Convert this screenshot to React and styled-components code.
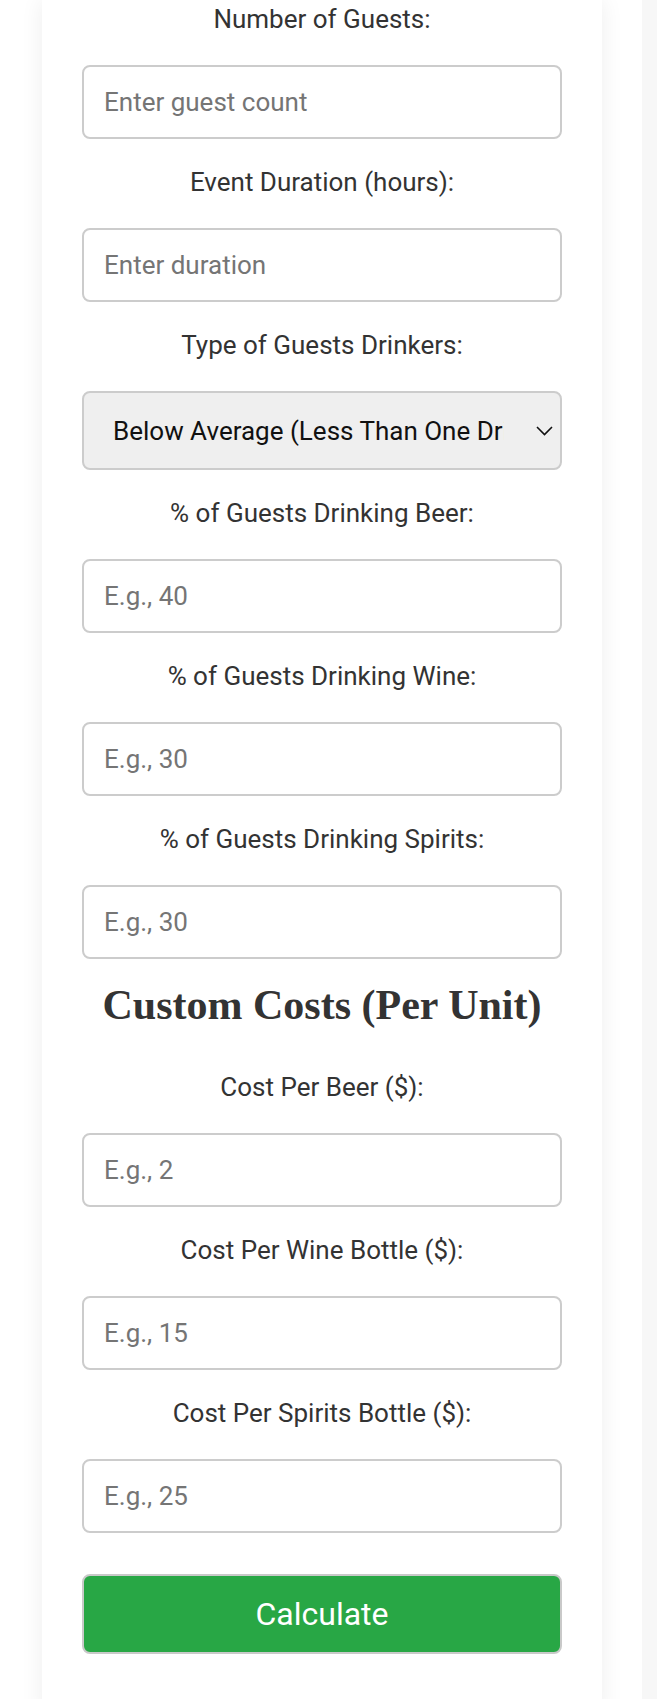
import React, { useState } from "react";
import styled, { createGlobalStyle } from "styled-components";

const GlobalStyle = createGlobalStyle`
  html, body {
    margin: 0;
    padding: 0;
    background: #f7f7f7;
  }
  body {
    font-family: Roboto, "Liberation Sans", Arial, sans-serif;
  }
  * { box-sizing: border-box; }
`;

const Page = styled.div`
  width: 642px;
  min-height: 1699px;
  background: #ffffff;
  padding: 0 40px 0 42px;
`;

const Card = styled.section`
  width: 560px;
  min-height: 1699px;
  background: #ffffff;
  box-shadow: 0 0 22px rgba(0, 0, 0, 0.07);
  padding: 4px 40px 60px;
`;

const Form = styled.form`
  display: flex;
  flex-direction: column;
  text-align: center;
`;

const Label = styled.label`
  display: block;
  font-size: 26px;
  line-height: 30px;
  color: #333;
  margin-bottom: 31px;
`;

const Input = styled.input`
  display: block;
  width: 100%;
  height: 74px;
  margin: 0 0 28px;
  padding: 0 20px;
  border: 2px solid #cccccc;
  border-radius: 8px;
  background: #fff;
  font-family: Roboto, "Liberation Sans", Arial, sans-serif;
  font-size: 26px;
  color: #222;
  outline: none;

  &::placeholder {
    color: #757575;
  }
`;

const SelectWrap = styled.div`
  position: relative;
  margin-bottom: 28px;
`;

const Select = styled.select`
  display: block;
  width: 100%;
  height: 79px;
  padding: 0 56px 0 29px;
  border: 2px solid #cccccc;
  border-radius: 8px;
  background: #efefef;
  font-family: Roboto, "Liberation Sans", Arial, sans-serif;
  font-size: 26px;
  color: #111;
  appearance: none;
  -webkit-appearance: none;
  outline: none;
`;

const Chevron = styled.svg`
  position: absolute;
  right: 9px;
  top: 35px;
  width: 17px;
  height: 10px;
  pointer-events: none;
`;

const Heading = styled.h2`
  margin: -5px 0 43px;
  font-family: "Liberation Serif", "Times New Roman", serif;
  font-weight: bold;
  font-size: 42px;
  line-height: 47px;
  color: #333;
`;

const Button = styled.button`
  display: block;
  width: 100%;
  height: 80px;
  margin-top: 13px;
  border: 2px solid #c9c9c9;
  border-radius: 8px;
  background: #28a745;
  color: #fff;
  font-family: Roboto, "Liberation Sans", Arial, sans-serif;
  font-size: 32px;
  cursor: pointer;
`;

const fields = [
  { id: "beer", label: "% of Guests Drinking Beer:", ph: "E.g., 40" },
  { id: "wine", label: "% of Guests Drinking Wine:", ph: "E.g., 30" },
  { id: "spirits", label: "% of Guests Drinking Spirits:", ph: "E.g., 30" },
];

const costs = [
  { id: "beerCost", label: "Cost Per Beer ($):", ph: "E.g., 2" },
  { id: "wineCost", label: "Cost Per Wine Bottle ($):", ph: "E.g., 15" },
  { id: "spiritsCost", label: "Cost Per Spirits Bottle ($):", ph: "E.g., 25" },
];

const App = () => {
  const [drinkers, setDrinkers] = useState("below");

  return (
    <>
      <GlobalStyle />
      <Page>
        <Card>
          <Form onSubmit={(e) => e.preventDefault()}>
            <Label htmlFor="guests">Number of Guests:</Label>
            <Input id="guests" type="number" placeholder="Enter guest count" />

            <Label htmlFor="duration">Event Duration (hours):</Label>
            <Input id="duration" type="number" placeholder="Enter duration" />

            <Label htmlFor="drinkers">Type of Guests Drinkers:</Label>
            <SelectWrap>
              <Select
                id="drinkers"
                value={drinkers}
                onChange={(e) => setDrinkers(e.target.value)}
              >
                <option value="below">Below Average (Less Than One Drink per Hour)</option>
                <option value="average">Average (One Drink per Hour)</option>
                <option value="above">Above Average (More Than One Drink per Hour)</option>
              </Select>
              <Chevron viewBox="0 0 17 10">
                <path d="M1 1l7.5 7.5L16 1" fill="none" stroke="#111" strokeWidth="1.6" />
              </Chevron>
            </SelectWrap>

            {fields.map((f) => (
              <React.Fragment key={f.id}>
                <Label htmlFor={f.id}>{f.label}</Label>
                <Input id={f.id} type="number" placeholder={f.ph} />
              </React.Fragment>
            ))}

            <Heading>Custom Costs (Per Unit)</Heading>

            {costs.map((f) => (
              <React.Fragment key={f.id}>
                <Label htmlFor={f.id}>{f.label}</Label>
                <Input id={f.id} type="number" placeholder={f.ph} />
              </React.Fragment>
            ))}

            <Button type="submit">Calculate</Button>
          </Form>
        </Card>
      </Page>
    </>
  );
};

export default App;
